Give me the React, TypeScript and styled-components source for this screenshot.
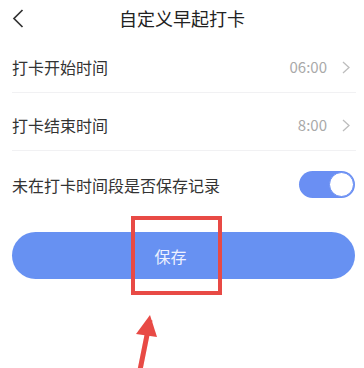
import { useState } from "react";
import styled, { createGlobalStyle } from "styled-components";

const GlobalStyle = createGlobalStyle`
  html, body {
    margin: 0;
    padding: 0;
    background: #ffffff;
  }
  body {
    font-family: "Noto Sans CJK SC", "Noto Sans", sans-serif;
    color: #333333;
  }
`;

const Page = styled.div`
  width: 364px;
  height: 368px;
  overflow: hidden;
  position: relative;
  background: #fff;
`;

const Header = styled.header`
  height: 35px;
  display: flex;
  align-items: center;
  justify-content: center;
  position: relative;
`;

const BackButton = styled.button`
  position: absolute;
  left: 8px;
  top: 6px;
  width: 20px;
  height: 24px;
  padding: 0;
  border: none;
  background: none;
  display: flex;
  align-items: center;
  justify-content: center;
`;

const Title = styled.h1`
  margin: 0;
  font-size: 18px;
  font-weight: 400;
  color: #222;
  line-height: 24px;
`;

const List = styled.div`
  padding: 0 8px 0 12px;
`;

const Row = styled.div<{ $last?: boolean }>`
  display: flex;
  align-items: center;
  justify-content: space-between;
  padding: ${(p) => (p.$last ? "20px 1px 0 0" : "22px 6px 15px 0")};
  border-bottom: ${(p) => (p.$last ? "none" : "1px solid #f1f1f3")};
`;

const Label = styled.span`
  font-size: 16px;
  line-height: 20px;
  color: #333;
`;

const Value = styled.span`
  display: flex;
  align-items: center;
  gap: 15px;
  font-size: 15px;
  line-height: 20px;
  color: #a9a9a9;
`;

const Toggle = styled.button<{ $on: boolean }>`
  width: 56px;
  height: 27px;
  padding: 0;
  border: none;
  border-radius: 14px;
  background: ${(p) => (p.$on ? "#6a8ff3" : "#dcdcdc")};
  display: flex;
  align-items: center;
  justify-content: ${(p) => (p.$on ? "flex-end" : "flex-start")};
  cursor: pointer;
`;

const Knob = styled.span`
  width: 23px;
  height: 23px;
  border-radius: 50%;
  background: #fff;
  border: 1.5px solid #6a8ff3;
  margin: 0 1px;
`;

const ButtonArea = styled.div`
  position: relative;
  margin: 34px 9px 0 12px;
`;

const SaveButton = styled.button`
  width: 100%;
  height: 47px;
  border: none;
  border-radius: 24px;
  background: #6791f2;
  color: #eef2ff;
  font-family: "Noto Sans CJK SC", "Noto Sans", sans-serif;
  font-size: 16px;
  display: flex;
  align-items: center;
  justify-content: center;
  padding: 0 26px 0 0;
`;

const Highlight = styled.div`
  position: absolute;
  left: 119px;
  top: -16px;
  width: 91px;
  height: 79px;
  box-sizing: border-box;
  border: 4px solid #e84a45;
  pointer-events: none;
`;

const Arrow = styled.svg`
  position: absolute;
  left: 120px;
  top: 310px;
  pointer-events: none;
`;

const Chevron = () => (
  <svg width="8" height="13" viewBox="0 0 8 13">
    <polyline
      points="1,1 7,6.5 1,12"
      fill="none"
      stroke="#bdbdbd"
      strokeWidth="1.3"
    />
  </svg>
);

const App = () => {
  const [keep, setKeep] = useState(true);

  return (
    <Page>
      <GlobalStyle />
      <Header>
        <BackButton aria-label="返回">
          <svg width="12" height="19" viewBox="0 0 12 19">
            <polyline
              points="10.5,1 2,9.5 10.5,18"
              fill="none"
              stroke="#333"
              strokeWidth="1.7"
            />
          </svg>
        </BackButton>
        <Title>自定义早起打卡</Title>
      </Header>

      <List>
        <Row>
          <Label>打卡开始时间</Label>
          <Value>
            06:00
            <Chevron />
          </Value>
        </Row>
        <Row>
          <Label>打卡结束时间</Label>
          <Value>
            8:00
            <Chevron />
          </Value>
        </Row>
        <Row $last>
          <Label>未在打卡时间段是否保存记录</Label>
          <Toggle $on={keep} onClick={() => setKeep(!keep)}>
            <Knob />
          </Toggle>
        </Row>
      </List>

      <ButtonArea>
        <SaveButton>保存</SaveButton>
        <Highlight />
      </ButtonArea>

      <Arrow width="50" height="60" viewBox="0 0 50 60">
        <line x1="30" y1="10" x2="20" y2="60" stroke="#e84a45" strokeWidth="5" />
        <polygon points="30,5 16,24 37,27" fill="#e84a45" />
      </Arrow>
    </Page>
  );
};

export default App;
